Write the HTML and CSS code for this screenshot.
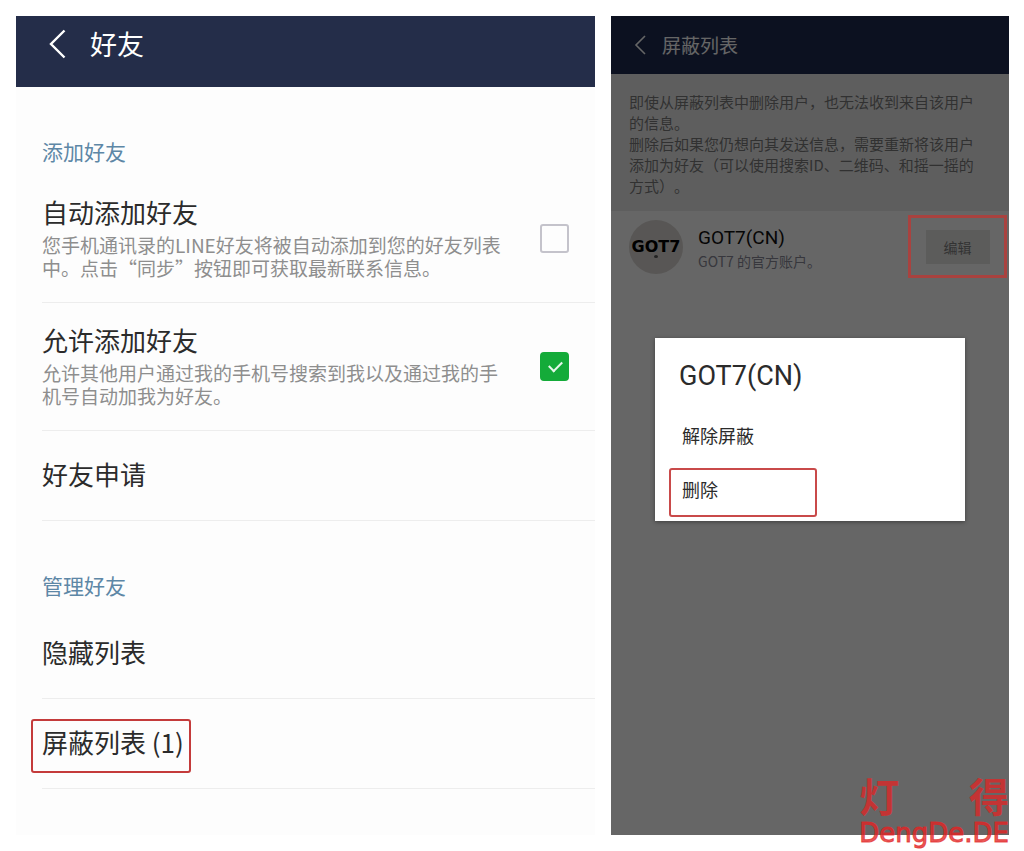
FILE: index.html
```html
<!DOCTYPE html>
<html lang="zh-CN">
<head>
    <meta charset="UTF-8">
    <meta name="viewport" content="width=device-width, initial-scale=1.0">
    <title>好友</title>
    <link rel="stylesheet" href="styles.css">
</head>
<body>

    <main class="friends">
        <header class="topbar">
            <button class="back" aria-label="返回">
                <svg width="18" height="30" viewBox="0 0 18 30"><path d="M16.500 1.500L3 15l13.500 13.500" fill="none" stroke="currentColor" stroke-width="2.4"/></svg>
            </button>
            <h1>好友</h1>
        </header>

        <h2>添加好友</h2>
        <div class="row">
            <label for="autoAdd">
                <span class="row-title">自动添加好友</span>
                <span class="row-desc">您手机通讯录的LINE好友将被自动添加到您的好友列表中。点击“同步”按钮即可获取最新联系信息。</span>
            </label>
            <input type="checkbox" id="autoAdd">
        </div>
        <div class="row">
            <label for="allowAdd">
                <span class="row-title">允许添加好友</span>
                <span class="row-desc">允许其他用户通过我的手机号搜索到我以及通过我的手机号自动加我为好友。</span>
            </label>
            <input type="checkbox" id="allowAdd" checked>
        </div>
        <div class="row row-link"><a href="#">好友申请</a></div>

        <h2>管理好友</h2>
        <div class="row row-link"><a href="#">隐藏列表</a></div>
        <div class="row row-link"><a href="#" class="marked">屏蔽列表 (1)</a></div>
    </main>

    <section class="blocked">
        <header class="topbar">
            <button class="back" aria-label="返回">
                <svg width="12" height="20" viewBox="0 0 12 20"><path d="M11 1L2 10l9 9" fill="none" stroke="currentColor" stroke-width="1.6"/></svg>
            </button>
            <h1>屏蔽列表</h1>
        </header>
        <p class="notice">即使从屏蔽列表中删除用户，也无法收到来自该用户的信息。<br>删除后如果您仍想向其发送信息，需要重新将该用户添加为好友（可以使用搜索ID、二维码、和摇一摇的方式）。</p>
        <div class="account">
            <div class="avatar">GOT7</div>
            <div class="account-info">
                <div class="account-name">GOT7(CN)</div>
                <div class="account-desc">GOT7 的官方账户。</div>
            </div>
            <div class="edit-frame"><button class="edit">编辑</button></div>
        </div>

        <div class="overlay"></div>
        <div class="dialog" role="dialog" aria-labelledby="dialogTitle">
            <h3 id="dialogTitle">GOT7(CN)</h3>
            <button>解除屏蔽</button>
            <button class="delete">删除</button>
        </div>
        <div class="watermark">
            <div class="watermark-cn"><span>灯</span><span>得</span></div>
            <div class="watermark-en">DengDe.DE</div>
        </div>
    </section>

</body>
</html>
```
FILE: styles.css
```css
* {
    box-sizing: border-box;
}

body {
    margin: 0;
    padding: 16px 15px 16px 16px;
    min-height: 100vh;
    display: flex;
    gap: 16px;
    background-color: #fff;
    font-family: "Noto Sans CJK SC", sans-serif;
    text-spacing-trim: space-all;
    color: #2b2b2b;
}

h1, h2, h3, p {
    margin: 0;
    font-weight: 400;
}

button {
    border: none;
    background: none;
    padding: 0;
    font-family: inherit;
    color: inherit;
    cursor: pointer;
}

.topbar {
    display: flex;
    align-items: center;
}

.back {
    display: flex;
}

/* Friends settings */
.friends {
    flex: 579 1 0;
    min-width: 0;
    background-color: #fdfdfd;
}

.friends .topbar {
    height: 71px;
    padding: 0 32px 16px;
    gap: 24px;
    background-color: #242d49;
    color: #fff;
}

.friends h1 {
    font-size: 27px;
    line-height: 40px;
}

.friends h2 {
    padding: 49px 26px 9px;
    font-size: 21px;
    line-height: 30px;
    color: #5d87a6;
}

.row {
    display: flex;
    align-items: center;
    justify-content: space-between;
    margin-left: 26px;
    padding-right: 26px;
    border-bottom: 1px solid #ededed;
}

.row label {
    width: 474px;
    padding: 17px 0 23px;
}

.row-title,
.row-desc {
    display: block;
}

.row-title,
.row a {
    font-size: 26px;
    line-height: 40px;
}

.row-desc {
    margin-top: 1px;
    font-size: 19px;
    line-height: 23px;
    color: #8e8e8e;
}

.row-link {
    padding: 23px 26px 26px 0;
}

.row a {
    color: inherit;
    text-decoration: none;
}

.row input {
    appearance: none;
    position: relative;
    flex: none;
    width: 29px;
    height: 29px;
    margin: 0;
    border: 2px solid #c4c3cb;
    border-radius: 3px;
}

.row input:checked {
    border-color: #14ab39;
    border-radius: 4px;
    background-color: #14ab39;
}

/* tick */
.row input:checked::after {
    content: "";
    position: absolute;
    left: 7px;
    top: 7px;
    width: 11px;
    height: 6px;
    border: solid #e6f7ea;
    border-width: 0 0 2px 2px;
    transform: rotate(-45deg);
}

.marked {
    position: relative;
}

.marked::after {
    content: "";
    position: absolute;
    inset: -3px -7px -11px -11px;
    border: 2px solid #c43b3b;
    border-radius: 3px;
}

/* Blocked list */
.blocked {
    position: relative;
    flex: 398 1 0;
    min-width: 0;
    background-color: #fff;
}

.blocked .topbar {
    height: 58px;
    padding: 0 23px;
    gap: 16px;
    background-color: #1e2c52;
    color: #fff;
}

.blocked h1 {
    font-size: 19px;
    line-height: 28px;
}

.notice {
    padding: 17px 22px 15px 18px;
    background-color: #ececec;
    font-size: 15px;
    line-height: 21px;
    color: #7c7c7c;
}

.account {
    display: flex;
    align-items: center;
    padding: 4px 2px 0 18px;
}

.avatar {
    position: relative;
    display: flex;
    align-items: center;
    justify-content: center;
    width: 54px;
    height: 54px;
    border-radius: 50%;
    background-color: #dcd8d4;
    font: bold 16px/16px "DejaVu Sans", sans-serif;
    color: #000;
}

.avatar::after {
    content: "";
    position: absolute;
    bottom: 16px;
    width: 4px;
    height: 3px;
    border-radius: 50%;
    background-color: #555;
}

.account-info {
    flex: 1;
    margin-left: 15px;
    padding-top: 5px;
}

.account-name {
    font-family: Roboto, sans-serif;
    font-size: 19px;
    line-height: 24px;
    color: #111;
}

.account-desc {
    font-size: 14px;
    line-height: 22px;
    color: #8a8a98;
}

.edit-frame {
    position: relative;
    z-index: 2;
    display: flex;
    align-items: center;
    justify-content: center;
    width: 99px;
    height: 63px;
    border: 3px solid #a9423f;
}

.edit {
    width: 64px;
    height: 34px;
    background-color: #5c5c5b;
    font-size: 14px;
    color: #333;
}

.overlay {
    position: absolute;
    inset: 0;
    background-color: rgba(0, 0, 0, 0.6);
}

.dialog {
    position: absolute;
    top: 322px;
    left: 44px;
    right: 44px;
    padding: 20px 14px 4px;
    display: flex;
    flex-direction: column;
    align-items: flex-start;
    background-color: #fff;
    box-shadow: 0 1px 4px rgba(0, 0, 0, 0.4);
}

.dialog h3 {
    padding: 0 10px;
    margin-bottom: 20px;
    font-family: Roboto, sans-serif;
    font-size: 27px;
    line-height: 36px;
}

.dialog button {
    width: 148px;
    height: 49px;
    padding: 0 11px 7px;
    border: 2px solid transparent;
    font-size: 18px;
    text-align: left;
}

.dialog .delete {
    margin-top: 5px;
    border-color: #c94a4a;
    border-radius: 3px;
}

.watermark {
    position: absolute;
    right: 0;
    bottom: -13px;
    color: rgba(226, 36, 36, 0.75);
}

.watermark-cn {
    display: flex;
    justify-content: space-between;
    font-size: 40px;
    line-height: 46px;
    font-weight: 700;
}

.watermark-en {
    font-family: "DejaVu Sans", sans-serif;
    font-size: 26px;
    line-height: 30px;
    -webkit-text-stroke: 1px;
}
```
